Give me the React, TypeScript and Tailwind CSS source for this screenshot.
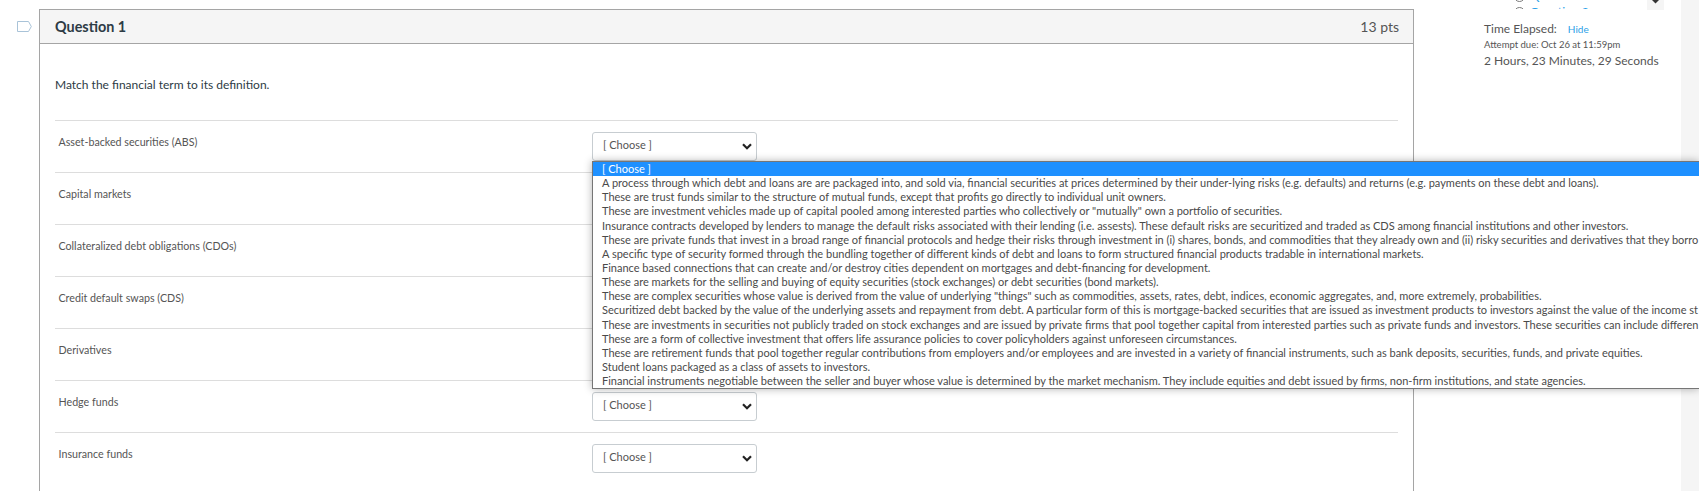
const font = "font-['Lato','Open_Sans',sans-serif]";
const TERMS = [
  'Asset-backed securities (ABS)',
  'Capital markets',
  'Collateralized debt obligations (CDOs)',
  'Credit default swaps (CDS)',
  'Derivatives',
  'Hedge funds',
  'Insurance funds',
];
const OPTIONS = [
  'A process through which debt and loans are are packaged into, and sold via, financial securities at prices determined by their under-lying risks (e.g. defaults) and returns (e.g. payments on these debt and loans).',
  'These are trust funds similar to the structure of mutual funds, except that profits go directly to individual unit owners.',
  'These are investment vehicles made up of capital pooled among interested parties who collectively or "mutually" own a portfolio of securities.',
  'Insurance contracts developed by lenders to manage the default risks associated with their lending (i.e. assests). These default risks are securitized and traded as CDS among financial institutions and other investors.',
  'These are private funds that invest in a broad range of financial protocols and hedge their risks through investment in (i) shares, bonds, and commodities that they already own and (ii) risky securities and derivatives that they borro',
  'A specific type of security formed through the bundling together of different kinds of debt and loans to form structured financial products tradable in international markets.',
  'Finance based connections that can create and/or destroy cities dependent on mortgages and debt-financing for development.',
  'These are markets for the selling and buying of equity securities (stock exchanges) or debt securities (bond markets).',
  'These are complex securities whose value is derived from the value of underlying "things" such as commodities, assets, rates, debt, indices, economic aggregates, and, more extremely, probabilities.',
  'Securitized debt backed by the value of the underlying assets and repayment from debt. A particular form of this is mortgage-backed securities that are issued as investment products to investors against the value of the income st',
  'These are investments in securities not publicly traded on stock exchanges and are issued by private firms that pool together capital from interested parties such as private funds and investors. These securities can include differen',
  'These are a form of collective investment that offers life assurance policies to cover policyholders against unforeseen circumstances.',
  'These are retirement funds that pool together regular contributions from employers and/or employees and are invested in a variety of financial instruments, such as bank deposits, securities, funds, and private equities.',
  'Student loans packaged as a class of assets to investors.',
  'Financial instruments negotiable between the seller and buyer whose value is determined by the market mechanism. They include equities and debt issued by firms, non-firm institutions, and state agencies.',
];

function Chevron() {
  return (
    <svg width="10" height="7" viewBox="0 0 10 7" className="shrink-0">
      <path d="M1 1.2 L5 5.2 L9 1.2" fill="none" stroke="#222" strokeWidth="2.2" />
    </svg>
  );
}

function ChooseBox() {
  return (
    <div className="flex h-[29px] w-[165px] items-center justify-between rounded-[3px] border border-[#c7cdd1] bg-white pl-[10px] pr-[4px] text-[11px] text-[#555]">
      <span className="pb-[2px]">[ Choose ]</span>
      <Chevron />
    </div>
  );
}

function QuestionLink({ label }: { label: string }) {
  return (
    <div className="flex h-[16px] gap-[5px] whitespace-nowrap text-[12px] leading-[16px] text-[#2b9fe8]">
      <svg width="11" height="11" viewBox="0 0 11 11" className="mt-[3px] shrink-0">
        <circle cx="5.5" cy="5.5" r="5" fill="none" stroke="#777" strokeWidth="1" />
      </svg>
      <span>{label}</span>
    </div>
  );
}

export default function App() {
  return (
    <div className={`relative flex h-[491px] w-[1699px] overflow-hidden bg-white ${font}`}>
      <div className="flex w-[39px] shrink-0 justify-start pl-[17px] pt-[21px]">
        <svg width="15" height="11" viewBox="0 0 15 11">
          <path d="M0.5 0.5 H11.5 L14.3 5.5 L11.5 10.5 H0.5 Z" fill="#fff" stroke="#a9c3d8" strokeWidth="1" />
        </svg>
      </div>
      <div className="mt-[9px] h-[600px] w-[1375px] shrink-0 border border-[#a5a5a5]">
        <div className="flex h-[34px] items-center justify-between border-b border-[#a5a5a5] bg-[#f5f5f5] pl-[15px] pr-[14px]">
          <span className="text-[14.4px] font-bold text-[#2d3b45]">Question 1</span>
          <span className="text-[14px] text-[#555]">13 pts</span>
        </div>
        <div className="px-[15px] pt-[33px]">
          <p className="pb-[27px] text-[12px] leading-[16px] text-[#2d3b45]">Match the financial term to its definition.</p>
          {TERMS.map((term, i) => (
            <div key={term} className="flex h-[52px] border-t border-[#ddd] pt-[11px]">
              <div className="w-[537px] pl-[3.5px] pt-[2px] text-[10.7px] leading-[16px] text-[#555]">{term}</div>
              {(i === 0 || i >= 5) && <ChooseBox />}
            </div>
          ))}
        </div>
      </div>
      <div className="relative w-[267px] shrink-0 pl-[70px] pt-[21px] text-[#555]">
        <div className="absolute left-[100px] top-0 h-[9px] overflow-hidden">
          <div className="-mt-[12px]">
            <QuestionLink label="Question 1" />
            <QuestionLink label="Question 2" />
          </div>
        </div>
        <div className="absolute left-[233px] top-0 flex h-[10px] w-[17px] justify-center bg-[#f5f5f5]">
          <svg width="7" height="4" viewBox="0 0 7 4">
            <path d="M0 0 H7 L3.5 3.5 Z" fill="#333" />
          </svg>
        </div>
        <div className="flex items-baseline gap-[11px] text-[12px] leading-[16px]">
          <span>Time Elapsed:</span>
          <span className="text-[10px] text-[#2b9fe8]">Hide</span>
        </div>
        <div className="mt-[1px] text-[9.5px] leading-[14px] whitespace-nowrap">Attempt due: Oct 26 at 11:59pm</div>
        <div className="mt-[1px] text-[12px] leading-[16px] whitespace-nowrap">2 Hours, 23 Minutes, 29 Seconds</div>
      </div>
      <div className="flex-1 bg-[#f5f5f5]" />
      <div className="absolute left-[592px] top-[161px] w-[1107px] overflow-hidden border border-r-0 border-[#767676] bg-white text-[11px] leading-[14.15px] text-[#4a4a4a] shadow-[0_0_8px_rgba(0,0,0,0.3)]">
        <div className="h-[14.15px] bg-[#1e90ff] pl-[9px] text-white">[ Choose ]</div>
        {OPTIONS.map((o) => (
          <div key={o} className="h-[14.15px] whitespace-nowrap pl-[9px]">{o}</div>
        ))}
      </div>
    </div>
  );
}
